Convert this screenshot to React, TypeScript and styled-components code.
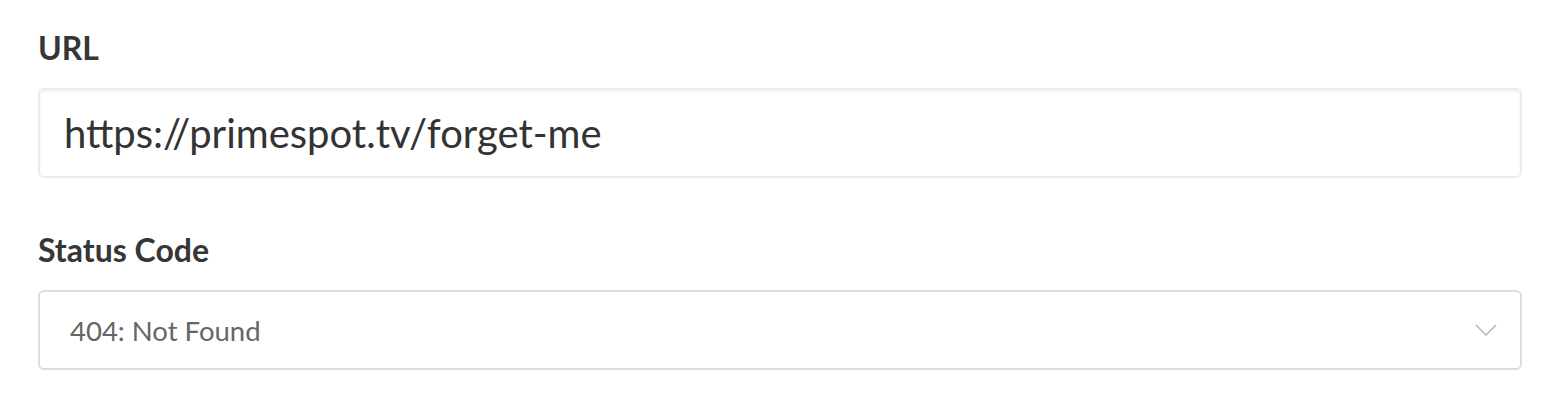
import React from "react";
import styled, { createGlobalStyle } from "styled-components";

const GlobalStyle = createGlobalStyle`
  html, body {
    margin: 0;
    padding: 0;
    background: #fff;
  }
  body {
    font-family: Lato, "Open Sans", sans-serif;
    color: #333;
  }
`;

const Form = styled.form`
  display: flex;
  flex-direction: column;
  gap: 52px;
  width: 1484px;
  padding: 28px 0 0 38px;
`;

const Field = styled.div`
  display: flex;
  flex-direction: column;
`;

const Label = styled.label`
  font-size: 32px;
  font-weight: 700;
  color: #363636;
  line-height: 40px;
  margin-bottom: 20px;
`;

const TextInput = styled.input`
  box-sizing: border-box;
  height: 90px;
  width: 100%;
  padding: 0 24px;
  border: 2px solid #ececec;
  border-radius: 6px;
  box-shadow: inset 0 2px 3px rgba(0, 0, 0, 0.06);
  font-family: Lato, sans-serif;
  font-size: 40px;
  color: #333;
  outline: none;
`;

const SelectBox = styled.div`
  box-sizing: border-box;
  height: 80px;
  display: flex;
  align-items: center;
  padding: 0 30px;
  border: 2px solid #dcdde3;
  border-radius: 6px;
  font-size: 27.5px;
  color: #666;
`;

const SelectValue = styled.span`
  flex: 1;
`;

const Chevron = styled.svg`
  width: 22px;
  height: 12px;
  margin-right: -7px;
`;

export default function App() {
  return (
    <>
      <GlobalStyle />
      <Form onSubmit={(e) => e.preventDefault()}>
        <Field>
          <Label>URL</Label>
          <TextInput defaultValue="https://primespot.tv/forget-me" />
        </Field>
        <Field>
          <Label>Status Code</Label>
          <SelectBox>
            <SelectValue>404: Not Found</SelectValue>
            <Chevron viewBox="0 0 22 12">
              <path d="M1 1l10 10 10-10" fill="none" stroke="#b9bac6" strokeWidth="1.6" />
            </Chevron>
          </SelectBox>
        </Field>
      </Form>
    </>
  );
}
